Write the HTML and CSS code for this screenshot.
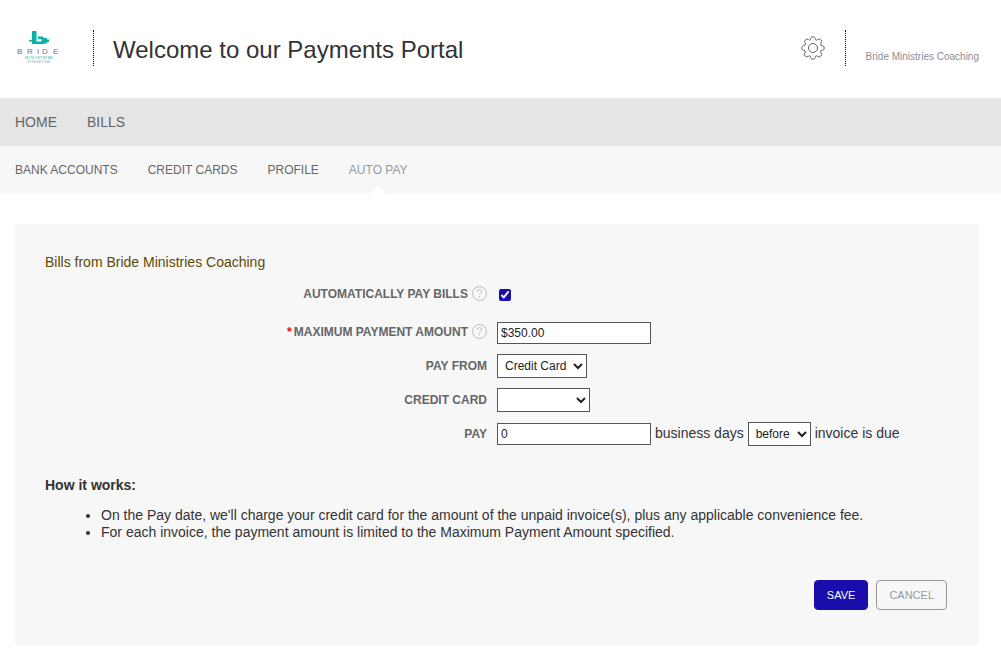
FILE: index.html
```html
<!DOCTYPE html>
<html lang="en">
<head>
    <meta charset="utf-8">
    <title>Payments Portal</title>
    <link rel="stylesheet" href="styles.css">
</head>
<body>
    <header class="header">
        <svg class="logo" viewBox="0 0 48 36" role="img" aria-label="Bride Ministries">
            <path class="logo-mark" d="M15 1h4.500v10.500h5V9H21V6.500h5.500V8H30v1.500h2V12h-2v1.500h-3V14H15v-2.500h-3V10h3z"/>
            <text class="logo-name" x="0 10 20 25 36" y="24">BRIDE</text>
            <text class="logo-sub" x="8 12 14 18 20 23 26 29 31 33" y="29">MINISTRIES</text>
            <text class="logo-small" x="10" y="33">INTERNATIONAL</text>
        </svg>
        <h1 class="title">Welcome to our Payments Portal</h1>
        <button class="settings" type="button" aria-label="Settings">
            <svg viewBox="0 0 24 24">
                <path d="M9.8 2.5Q10 .7 12 .7t2.200 1.800l.3 1.200 1.300.5 1.100-.7q1.600-1 3 .4t.4 3l-.7 1.100.5 1.400 1.200.3q2 .4 2 2.300t-2 2.300l-1.200.3-.5 1.400.7 1.100q1 1.600-.4 3t-3 .4l-1.100-.7-1.300.5-.3 1.200Q14 23.300 12 23.300t-2.200-1.800l-.3-1.200-1.300-.5-1.100.7q-1.600 1-3-.4t-.4-3l.7-1.100-.5-1.400-1.200-.3q-2-.4-2-2.300t2-2.300l1.200-.3.5-1.400L4 6.900q-1-1.600.4-3t3-.4l1.100.7 1-.5z"/>
                <circle cx="12" cy="12" r="4.500"/>
            </svg>
        </button>
        <div class="account">Bride Ministries Coaching</div>
    </header>

    <nav class="main-nav">
        <a href="#">HOME</a>
        <a href="#">BILLS</a>
    </nav>
    <nav class="sub-nav">
        <a href="#">BANK ACCOUNTS</a>
        <a href="#">CREDIT CARDS</a>
        <a href="#">PROFILE</a>
        <a href="#" class="active">AUTO PAY</a>
    </nav>

    <main class="panel">
        <h2 class="panel-title">Bills from Bride Ministries Coaching</h2>
        <form>
            <div class="fields">
                <div class="label">
                    <label for="autoPay">AUTOMATICALLY PAY BILLS</label>
                    <svg class="help" viewBox="0 0 15 15"><circle cx="7.5" cy="7.5" r="7"/><path d="M5.300 5.800Q5.300 3.700 7.500 3.700t2.200 1.900q0 1-1.200 1.700-1 .6-1 1.500M7.500 10v1.400"/></svg>
                </div>
                <div class="field first"><input type="checkbox" id="autoPay" checked></div>

                <div class="label">
                    <label for="maxAmount"><span class="required">*</span>MAXIMUM PAYMENT AMOUNT</label>
                    <svg class="help" viewBox="0 0 15 15"><circle cx="7.5" cy="7.5" r="7"/><path d="M5.300 5.800Q5.300 3.700 7.500 3.700t2.200 1.900q0 1-1.200 1.700-1 .6-1 1.500M7.500 10v1.400"/></svg>
                </div>
                <div class="field"><input type="text" id="maxAmount" value="$350.00"></div>

                <div class="label"><label for="payFrom">PAY FROM</label></div>
                <div class="field">
                    <select id="payFrom"><option>Credit Card</option></select>
                </div>

                <div class="label"><label for="creditCard">CREDIT CARD</label></div>
                <div class="field">
                    <select id="creditCard" class="card-select"><option></option></select>
                </div>

                <div class="label"><label for="days">PAY</label></div>
                <div class="field">
                    <input type="text" id="days" value="0">
                    <span class="text">business days</span>
                    <select aria-label="Before or after"><option>before</option></select>
                    <span class="text">invoice is due</span>
                </div>
            </div>

            <h3 class="info-title">How it works:</h3>
            <ul class="info">
                <li>On the Pay date, we'll charge your credit card for the amount of the unpaid invoice(s), plus any applicable convenience fee.</li>
                <li>For each invoice, the payment amount is limited to the Maximum Payment Amount specified.</li>
            </ul>

            <div class="buttons">
                <button type="submit" class="btn save">SAVE</button>
                <button type="button" class="btn cancel">CANCEL</button>
            </div>
        </form>
    </main>
</body>
</html>
```
FILE: styles.css
```css
* {
    box-sizing: border-box;
}

body {
    margin: 0;
    background-color: #fff;
    color: #333;
    font-family: "Liberation Sans", Arial, sans-serif;
    font-size: 14px;
    line-height: 17px;
}

/* header */
.header {
    display: flex;
    align-items: center;
    padding: 30px 22px 32px 17px;
}

.logo {
    width: 48px;
    height: 36px;
    margin-right: 28px;
}

.logo-mark {
    fill: #0fb0a8;
}

.logo-name {
    fill: #66758a;
    font-size: 8px;
}

.logo-sub {
    fill: #0fb0a8;
    font-size: 4px;
}

.logo-small {
    fill: #a9b1bb;
    font-size: 3px;
}

.title {
    flex: 1;
    margin: 0;
    padding-left: 19px;
    border-left: 1px dotted #000;
    font-size: 24px;
    font-weight: normal;
    line-height: 40px;
}

.title,
.account {
    height: 36px;
}

.settings {
    width: 24px;
    height: 24px;
    margin-right: 20px;
    padding: 0;
    border: none;
    background: none;
    cursor: pointer;
}

.settings svg {
    display: block;
    fill: none;
    stroke: #666;
}

.account {
    padding: 18px 0 0 20px;
    border-left: 1px dotted #000;
    color: #8c8c98;
    font-size: 10px;
}

/* navigation */
.main-nav,
.sub-nav {
    display: flex;
    gap: 30px;
    padding: 0 15px;
    line-height: 48px;
}

.main-nav {
    background-color: #e5e5e5;
}

.sub-nav {
    background-color: #f7f7f7;
    font-size: 12px;
}

.main-nav a,
.sub-nav a {
    color: #666;
    text-decoration: none;
}

.sub-nav .active {
    position: relative;
    color: #999;
}

.sub-nav .active::after {
    content: "";
    position: absolute;
    bottom: 0;
    left: 50%;
    margin-left: -8px;
    border: 8px solid transparent;
    border-top: none;
    border-bottom-color: #fff;
}

/* form panel */
.panel {
    margin: 30px 22px 0 15px;
    padding: 30px 32px 35px 30px;
    background-color: #f7f7f7;
}

.panel-title {
    margin: 0 0 7px;
    color: #5c4a00;
    font-size: 14px;
    font-weight: normal;
}

.fields {
    display: grid;
    grid-template-columns: 49% 1fr;
    gap: 10px;
    align-items: center;
}

.label {
    display: flex;
    justify-content: flex-end;
    gap: 4px;
    color: #666;
    font-size: 12px;
    font-weight: bold;
}

.required {
    margin-right: 2px;
    color: #f00;
}

.help {
    width: 15px;
    height: 15px;
    margin-bottom: 4px;
    fill: none;
    stroke: #bbb;
}

.field {
    display: flex;
    align-items: center;
    gap: 4px;
}

.first {
    height: 34px;
}

.text {
    padding-bottom: 2px;
}

input[type="text"],
select {
    border: 1px solid #555;
    border-radius: 0;
    background-color: #fff;
    color: #222;
    font-family: inherit;
    font-size: 12px;
}

input[type="text"] {
    width: 154px;
    height: 22px;
    padding: 1px 3px;
}

select {
    height: 24px;
    padding: 0 3px;
}

.card-select {
    width: 93px;
}

input[type="checkbox"] {
    width: 12px;
    height: 12px;
    margin: 0 2px;
    accent-color: #1a0dab;
}

.info-title {
    margin: 31px 0 13px;
    font-size: 14px;
}

.info {
    margin: 0;
    padding-left: 56px;
}

/* buttons */
.buttons {
    display: flex;
    justify-content: flex-end;
    gap: 8px;
    margin-top: 39px;
}

.btn {
    height: 30px;
    padding: 0 12px;
    border: 1px solid #999;
    border-radius: 4px;
    font-family: inherit;
    font-size: 11px;
    cursor: pointer;
}

.save {
    border-color: #1a0dab;
    background-color: #1a0dab;
    color: #fff;
}

.cancel {
    background-color: transparent;
    color: #999;
}
```
